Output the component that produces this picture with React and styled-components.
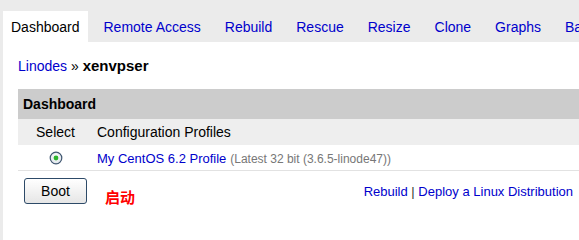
import styled, { createGlobalStyle } from "styled-components";

const GlobalStyle = createGlobalStyle`
    html, body {
        margin: 0;
        padding: 0;
        height: 100%;
        background: #ebebeb;
        overflow: hidden;
    }
    body {
        font-family: "Liberation Sans", Arial, sans-serif;
        font-size: 14px;
        color: #000;
    }
`;

const tabs = ["Dashboard", "Remote Access", "Rebuild", "Rescue", "Resize", "Clone", "Graphs", "Backups"];

export default function App() {
    return (
        <Page>
            <GlobalStyle />
            <TabBar>
                {tabs.map((name, i) => (
                    <Tab key={name} active={i === 0}>{name}</Tab>
                ))}
            </TabBar>

            <Panel>
                <Breadcrumb>
                    <Link>Linodes</Link> » <Current>xenvpser</Current>
                </Breadcrumb>

                <Table>
                    <HeaderRow>Dashboard</HeaderRow>
                    <ColumnsRow>
                        <SelectCell>Select</SelectCell>
                        <ProfileCell>Configuration Profiles</ProfileCell>
                    </ColumnsRow>
                    <DataRow>
                        <SelectCell>
                            <Radio />
                        </SelectCell>
                        <ProfileCell>
                            <Link size="13px">My CentOS 6.2 Profile</Link> <Note>(Latest 32 bit (3.6.5-linode47))</Note>
                        </ProfileCell>
                    </DataRow>
                </Table>

                <Actions>
                    <BootGroup>
                        <Button>Boot</Button>
                        <Hint>启动</Hint>
                    </BootGroup>
                    <Links>
                        <Link size="13px">Rebuild</Link> <Sep>|</Sep> <Link size="13px">Deploy a Linux Distribution</Link>
                    </Links>
                </Actions>
            </Panel>
        </Page>
    );
}

function Radio() {
    return (
        <svg width="14" height="14" viewBox="0 0 14 14">
            <defs>
                <radialGradient id="rb" cx="50%" cy="40%" r="60%">
                    <stop offset="0" stopColor="#ffffff" />
                    <stop offset="1" stopColor="#dde3ea" />
                </radialGradient>
            </defs>
            <circle cx="7" cy="7" r="5.8" fill="url(#rb)" stroke="#3f5670" strokeWidth="1.2" />
            <circle cx="7" cy="7" r="2.4" fill="#2db42d" />
        </svg>
    );
}

const Page = styled.div`
    width: 579px;
    height: 100vh;
    display: flex;
    flex-direction: column;
`;

const TabBar = styled.div`
    display: flex;
    padding: 11px 0 0 3px;
    white-space: nowrap;
    overflow: hidden;
`;

const Tab = styled.div`
    flex-shrink: 0;
    padding: 2px 8px 0;
    margin-right: 8px;
    height: 29px;
    line-height: 29px;
    font-size: 14px;
    color: ${({ active }) => active ? '#000' : '#0000cc'};
    background: ${({ active }) => active ? '#fff' : 'transparent'};
`;

const Panel = styled.div`
    flex: 1;
    margin-left: 3px;
    padding-left: 15px;
    background: #fff;
`;

const Breadcrumb = styled.div`
    padding: 16px 0 15px;
    line-height: 16px;
    font-size: 14px;
`;

const Current = styled.strong`
    font-size: 15px;
`;

const Link = styled.span`
    color: #0000cc;
    font-size: ${({ size }) => size || '14px'};
`;

const Table = styled.div`
    display: flex;
    flex-direction: column;
`;

const HeaderRow = styled.div`
    height: 30px;
    line-height: 30px;
    padding-left: 5px;
    background: #cccccc;
    font-weight: bold;
    font-size: 14px;
`;

const ColumnsRow = styled.div`
    display: flex;
    height: 26px;
    align-items: center;
    background: #eeeeee;
`;

const DataRow = styled(ColumnsRow)`
    height: 25px;
    background: #fff;
    border-bottom: 1px solid #e2e2e2;
`;

const SelectCell = styled.div`
    width: 75px;
    display: flex;
    justify-content: center;
    align-items: center;
`;

const ProfileCell = styled.div`
    padding-left: 4px;
    white-space: nowrap;
`;

const Note = styled.span`
    color: #777;
    font-size: 12px;
`;

const Actions = styled.div`
    display: flex;
    justify-content: space-between;
    align-items: center;
    padding: 7px 6px 0 6px;
`;

const BootGroup = styled.div`
    display: flex;
    align-items: center;
    gap: 18px;
`;

const Button = styled.button`
    width: 63px;
    height: 26px;
    padding: 0;
    font-family: "Liberation Sans", Arial, sans-serif;
    font-size: 14px;
    color: #000;
    border: 1px solid #2d4a68;
    border-radius: 3px;
    background: linear-gradient(#ffffff, #e6e6e6);
`;

const Hint = styled.span`
    margin-top: 11px;
    font-family: "Noto Sans CJK SC", sans-serif;
    font-weight: bold;
    font-size: 15px;
    line-height: 15px;
    color: #ff0000;
`;

const Links = styled.div`
    font-size: 13px;
    white-space: nowrap;
`;

const Sep = styled.span`
    color: #333;
`;
